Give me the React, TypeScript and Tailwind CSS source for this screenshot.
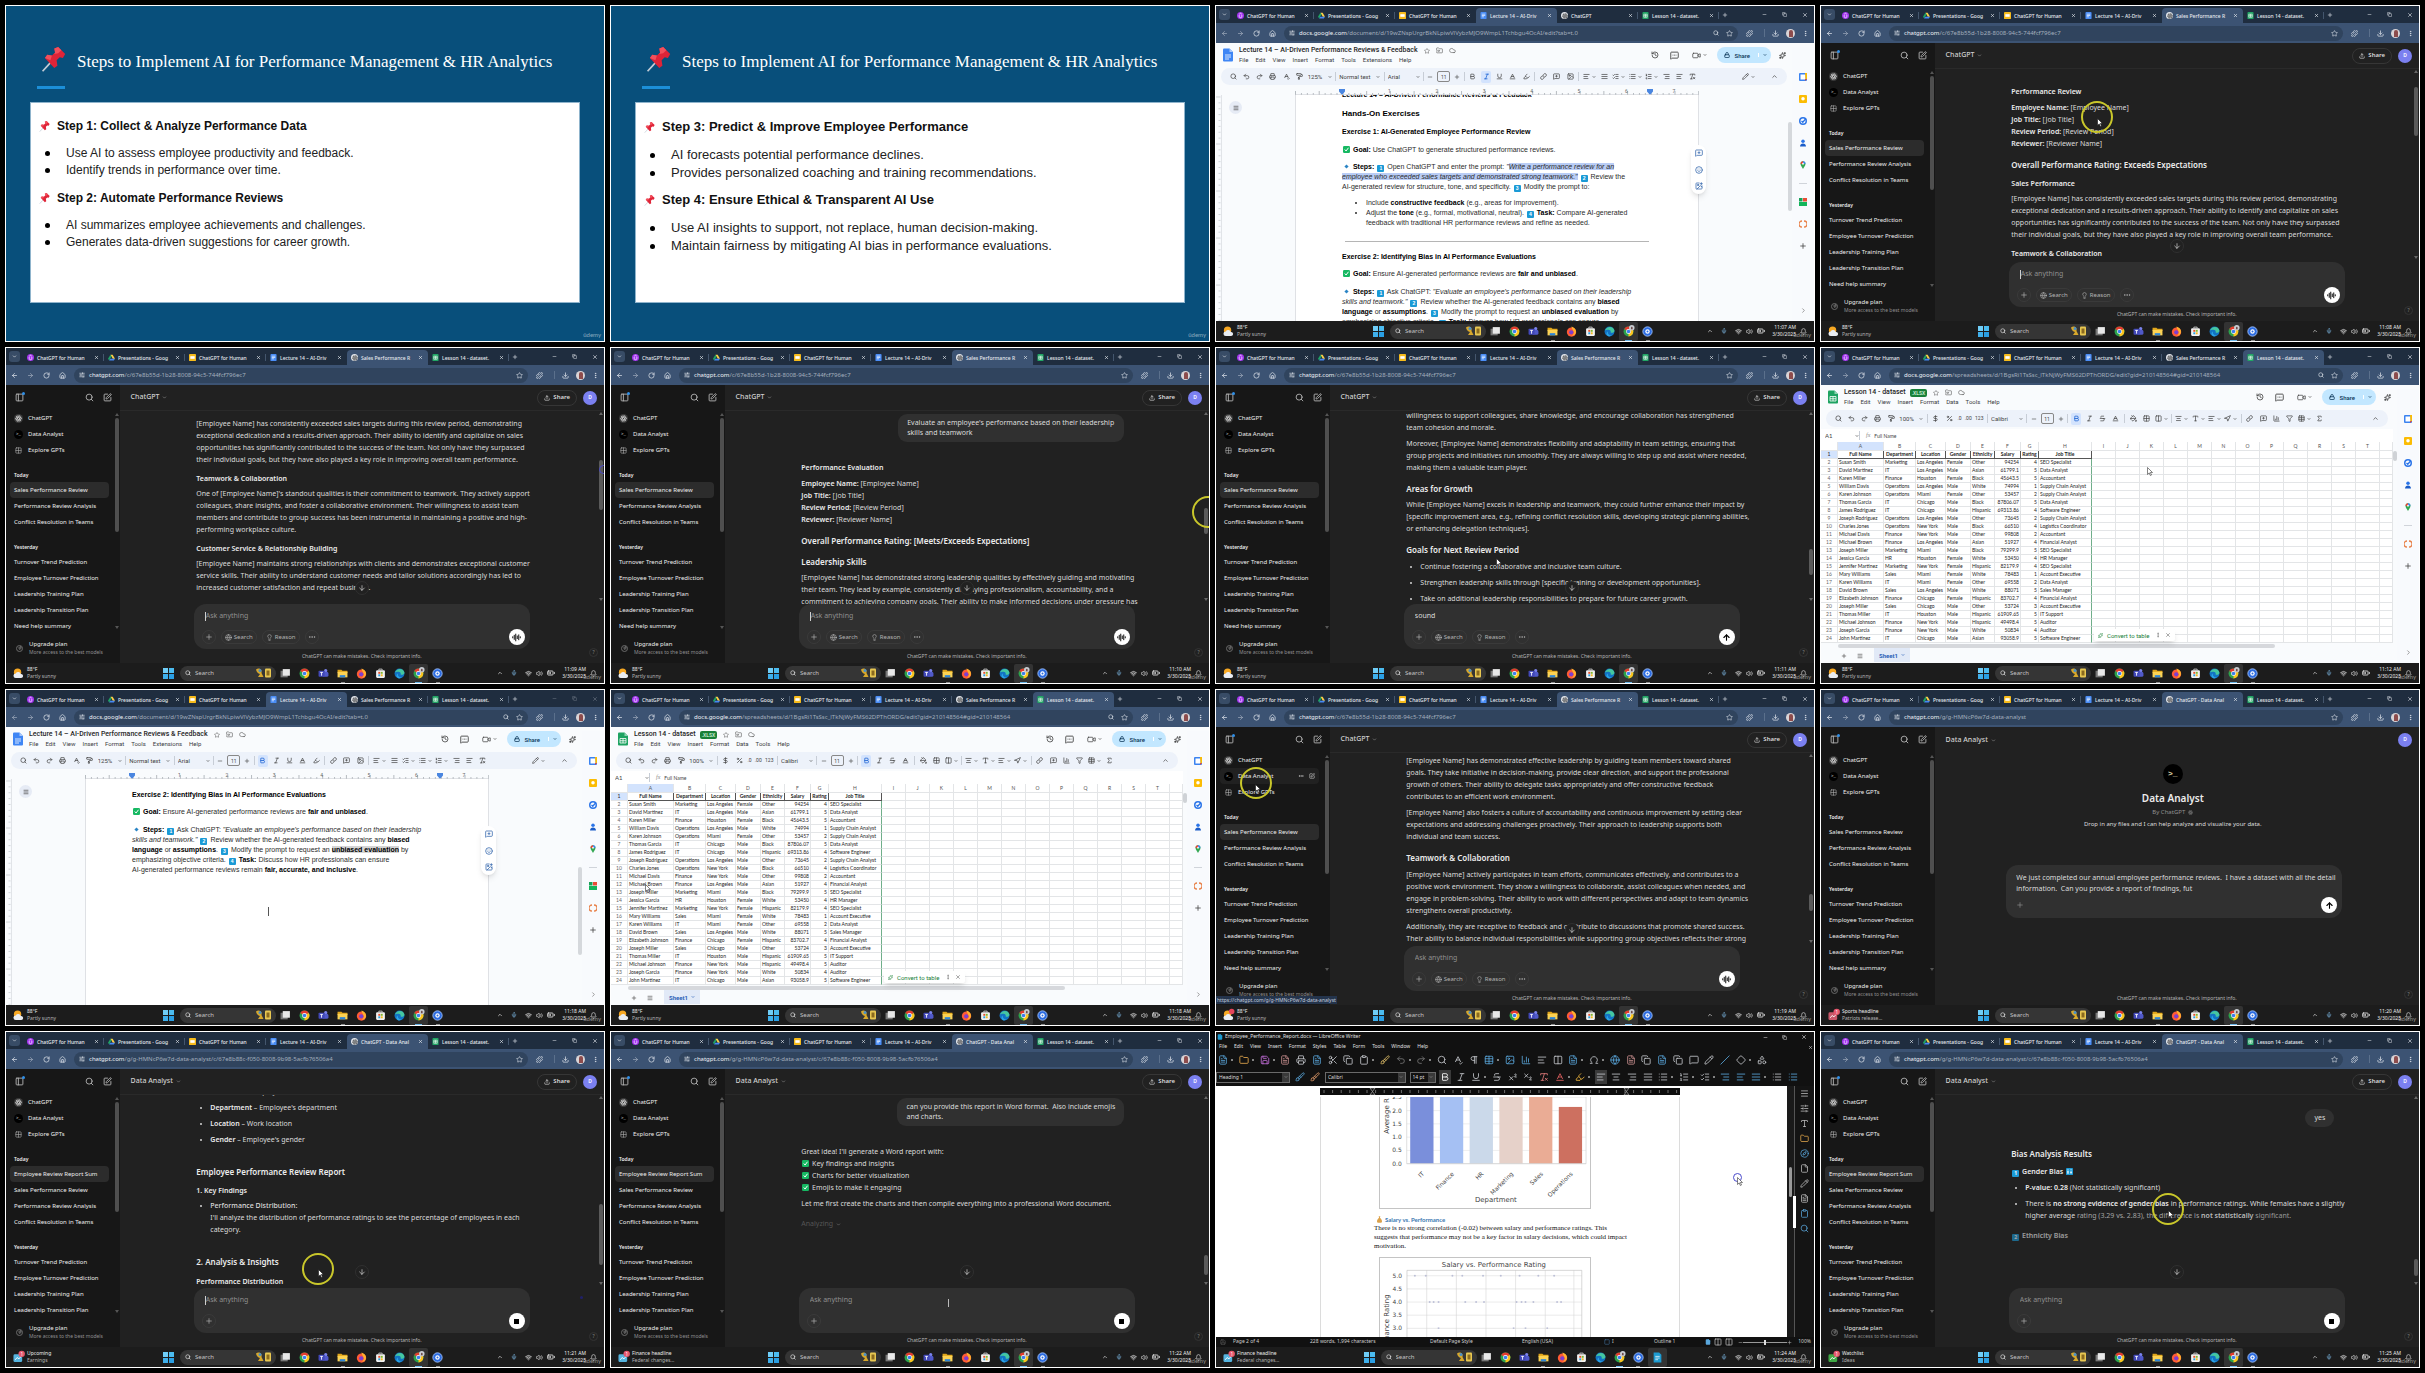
import React from 'react';
import {
  AlignCenter, AlignJustify, AlignLeft, AlignRight, ArrowDown, ArrowLeft, ArrowRight, ArrowUp, AudioLines,
  Baseline, BatteryMedium, Bell, Bold, Brush, ChevronDown, ChevronRight, ChevronUp, Clipboard, Cloud, Columns2, Copy,
  Diamond, DollarSign, Download, Ellipsis, EllipsisVertical, File, FileText, Filter, Folder, FolderInput, Globe, Grid2x2,
  Highlighter, History, House, Image, ImagePlus, Italic, Lightbulb, Link, List, ListChecks, ListOrdered, Lock,
  Menu, MessageSquare, MessageSquareMore, MessageSquarePlus, Mic, Minus, Navigation, Omega, PaintBucket, PaintRoller,
  PanelLeft, Pencil, Percent, Pilcrow, Plus, Printer, Puzzle, Redo2, RemoveFormatting, RotateCw, Save, Scissors, Search,
  Shapes, Sigma, SlidersHorizontal, Smile, Sparkles, SpellCheck, Square, SquarePen, Star, Strikethrough, Subscript,
  Superscript, Table, Type, Underline, Undo2, Upload, Video, Volume2, Wifi, X, Zap, BarChart3, Compass, Slash,
} from 'lucide-react';

type IconType = React.ComponentType<{ className?: string; strokeWidth?: number }>;

/* ------------------------------------------------------------------ shared */

function IconButton({ icon: Icon, label, className = '' }: { icon: IconType; label: string; className?: string }) {
  return (
    <button aria-label={label} className={`grid shrink-0 place-items-center ${className}`}>
      <Icon className="size-full" strokeWidth={2.4} />
    </button>
  );
}

function Frame({ children }: { children: React.ReactNode }) {
  return (
    <section className="relative flex aspect-[600/337] min-w-0 flex-col overflow-hidden border border-white">
      {children}
    </section>
  );
}

function Pointer({ className, dark = false }: { className: string; dark?: boolean }) {
  return (
    <svg viewBox="0 0 12 18" className={`absolute h-[9px] w-[6px] ${className}`}>
      <path d="M1 1v14l3.4-3.2 2.3 5.2 2.3-1-2.3-5H11z" fill="#fff" stroke={dark ? '#333' : '#111'} strokeWidth="1.2" />
    </svg>
  );
}

function Ring({ className }: { className: string }) {
  return <div className={`absolute size-8 rounded-full border-2 border-[#c9c72b] ${className}`} />;
}

function Watermark() {
  return <div className="absolute right-[3px] bottom-[2px] font-['Lato'] text-[6px] leading-[8px] text-white/50">ûdemy</div>;
}

/* --------------------------------------------------------------- favicons */

function GptMark({ className = '' }: { className?: string }) {
  return (
    <svg viewBox="0 0 24 24" className={className} fill="none" stroke="currentColor" strokeWidth="1.7">
      {[0, 60, 120, 180, 240, 300].map((a) => (
        <path key={a} transform={`rotate(${a} 12 12)`} d="M12 8.2V5.4a3.6 3.6 0 0 1 6.4-1.6M8.7 10.1l6.2-3.6" />
      ))}
      <circle cx="12" cy="12" r="8.6" />
    </svg>
  );
}

function Favicon({ kind }: { kind: string }) {
  if (kind === 'udemy')
    return (
      <svg viewBox="0 0 16 16" className="size-[7px] shrink-0"><circle cx="8" cy="8" r="8" fill="#a435f0" /><path d="M5 7v3a3 3 0 0 0 6 0V7M5 5l3-2 3 2" stroke="#fff" strokeWidth="1.6" fill="none" /></svg>
    );
  if (kind === 'drive')
    return (
      <svg viewBox="0 0 16 16" className="size-[7px] shrink-0"><path d="M5.5 1.5h5L16 11h-5z" fill="#ffcf48" /><path d="M5.5 1.5 0 11l2.6 4L8 5.8z" fill="#1fa463" /><path d="M5.2 11H16l-2.6 4H2.6z" fill="#4688f4" /></svg>
    );
  if (kind === 'slides')
    return (
      <svg viewBox="0 0 16 16" className="size-[7px] shrink-0"><rect width="16" height="16" rx="2" fill="#f6bb1b" /><rect x="3" y="5" width="10" height="6" fill="#fff" /></svg>
    );
  if (kind === 'docs')
    return (
      <svg viewBox="0 0 16 16" className="size-[7px] shrink-0"><rect x="1" width="14" height="16" rx="2" fill="#4a8df6" /><path d="M4 5h8M4 8h8M4 11h5" stroke="#fff" strokeWidth="1.5" /></svg>
    );
  if (kind === 'sheets')
    return (
      <svg viewBox="0 0 16 16" className="size-[7px] shrink-0"><rect x="1" width="14" height="16" rx="2" fill="#21a464" /><path d="M4 5h8v7H4zM4 8.5h8M8 5v7" stroke="#fff" strokeWidth="1.3" fill="none" /></svg>
    );
  return (
    <span className="grid size-[7px] shrink-0 place-items-center rounded-full bg-[#e4e7ec] text-[#333]"><GptMark className="size-[6px]" /></span>
  );
}

/* ----------------------------------------------------------- browser chrome */

function BrowserBar({ active, gptTitle, host, path, zoomed = false, idle = false }: {
  active: number; gptTitle: string; host: string; path: string; zoomed?: boolean; idle?: boolean;
}) {
  const tabs = [
    ['udemy', 'ChatGPT for Human'],
    ['drive', 'Presentations - Goog'],
    ['slides', 'ChatGPT for Human'],
    ['docs', 'Lecture 14 – AI-Driv'],
    ['gpt', gptTitle],
    ['sheets', 'Lesson 14 - dataset.'],
  ];
  return (
    <header className="shrink-0 font-['Noto_Sans']">
      <div className="flex h-[17px] items-center bg-[#1f2d3f] text-[#e4e8ee]">
        <div className="grid w-[17px] place-items-center">
          <button aria-label="Search tabs" className="grid size-[11px] place-items-center rounded-[3px] bg-[#384c66]">
            <ChevronDown className="size-[5px]" strokeWidth={3} />
          </button>
        </div>
        <nav className="flex h-full items-end">
          {tabs.map(([kind, title], i) => (
            <a key={i} href="#tab" className={`flex h-[15px] w-[81px] items-center rounded-t-[4px] pr-[5px] pl-[4px] ${i === active ? 'bg-[#3c5373]' : ''}`}>
              <Favicon kind={kind} />
              <span className="ml-[3px] text-[5px] leading-[8px] font-medium whitespace-nowrap">{title}</span>
              <X className="ml-auto size-[5px] shrink-0" strokeWidth={3} />
              {i !== active && i + 1 !== active && <span className="-mr-[5px] ml-[4px] h-[7px] w-px bg-[#44566d]" />}
            </a>
          ))}
        </nav>
        <IconButton icon={Plus} label="New tab" className="ml-[3px] size-[6px]" />
        <div className={`ml-auto flex items-center gap-[15px] pr-[6px] ${idle ? 'opacity-40' : ''}`}>
          <IconButton icon={Minus} label="Minimize" className="size-[5px]" />
          <IconButton icon={Copy} label="Restore" className="size-[5px]" />
          <IconButton icon={X} label="Close" className="size-[6px]" />
        </div>
      </div>
      <div className="flex h-[20px] items-center bg-[#3c5373] pl-[5px] text-[#e2e7ee]">
        <div className="flex items-center gap-[9px]">
          <IconButton icon={ArrowLeft} label="Back" className={idle || active === 3 ? 'size-[7px] opacity-60' : 'size-[7px]'} />
          <IconButton icon={ArrowRight} label="Forward" className="size-[7px] opacity-60" />
          <IconButton icon={RotateCw} label="Reload" className="size-[7px]" />
          <IconButton icon={House} label="Home" className="size-[7px]" />
        </div>
        <div className="ml-[8px] flex h-[15px] min-w-0 flex-1 items-center rounded-full bg-[#30445e] px-[5px]">
          <SlidersHorizontal className="size-[6px]" strokeWidth={2.5} />
          <label className="ml-[4px] flex min-w-0 flex-1 items-center text-[6px] leading-[8px]">
            <span className="text-[#eef2f6]">{host}</span>
            <input aria-label="Address" readOnly value={path} className="min-w-0 flex-1 bg-transparent text-[#a3aebd] outline-none" />
          </label>
          {zoomed && <Search className="mr-[7px] size-[6px]" strokeWidth={2.5} />}
          <Star className="size-[7px]" strokeWidth={2} />
        </div>
        <div className="flex w-[76px] items-center justify-between pr-[5px] pl-[8px]">
          <IconButton icon={Puzzle} label="Extensions" className="size-[7px]" />
          <span className="ml-[4px] h-[8px] w-px bg-[#5b708c]" />
          <IconButton icon={Download} label="Downloads" className="size-[7px]" />
          <span className="grid size-[9px] place-items-center rounded-full bg-[#d9d4d6]"><span className="h-[7px] w-[4px] rounded-t-full bg-[#8d4c4c]" /></span>
          <IconButton icon={EllipsisVertical} label="Menu" className="size-[7px]" />
        </div>
      </div>
    </header>
  );
}

/* ------------------------------------------------------------------ taskbar */

function ChromeIcon({ badge = false }: { badge?: boolean }) {
  return (
    <svg viewBox="0 0 20 20" className="size-[11px] overflow-visible">
      <circle cx="10" cy="10" r="9" fill="#2ba24c" />
      <path d="M10 10 2.2 5.5A9 9 0 0 1 17.8 5.5z" fill="#e33b2e" />
      <path d="M10 10 17.8 5.5A9 9 0 0 1 10 19z" fill="#fcc31e" />
      <circle cx="10" cy="10" r="4.4" fill="#fff" />
      <circle cx="10" cy="10" r="3.3" fill="#3b7ded" />
      {badge && <circle cx="16" cy="3" r="5" fill="#c9cdd2" />}
      {badge && <path d="M14.5 6V3a1.5 1.5 0 0 1 3 0v3z" fill="#6c4a48" />}
    </svg>
  );
}

function TaskIcons({ writer }: { writer: boolean }) {
  const cell = 'relative grid h-[19px] w-[19px] place-items-center';
  return (
    <div className="flex items-center">
      <button aria-label="Task view" className={cell}><svg viewBox="0 0 20 20" className="size-[11px]"><rect x="1" y="5" width="13" height="12" fill="#777" /><rect x="5" y="2" width="13" height="12" fill="#e8e8e8" /></svg></button>
      <button aria-label="Chrome" className={cell}><ChromeIcon /></button>
      <button aria-label="Teams" className={cell}><svg viewBox="0 0 20 20" className="size-[11px]"><circle cx="14" cy="5" r="3" fill="#7b83eb" /><rect x="8" y="7" width="11" height="9" rx="3" fill="#5059c9" /><rect x="1" y="5" width="11" height="11" rx="1.5" fill="#4248b8" /><path d="M4 8h5M6.5 8v6" stroke="#fff" strokeWidth="1.6" /></svg></button>
      <button aria-label="File Explorer" className={cell}><svg viewBox="0 0 20 20" className="size-[11px]"><path d="M1 3h7l2 2h9v4H1z" fill="#e0a51b" /><path d="M1 7h18v10H1z" fill="#fcd354" /><path d="M5 13h10v4H5z" fill="#2f86d6" /></svg><i className="absolute bottom-0 h-px w-[4px] bg-[#8a8a8a]" /></button>
      <button aria-label="Firefox" className={cell}><svg viewBox="0 0 20 20" className="size-[11px]"><circle cx="10" cy="11" r="8.5" fill="#ff5a36" /><path d="M10 1c5 2 9 5 8 11-1 4-4 6-8 6 5-3 5-7 3-10-1-2-3-4-3-7z" fill="#ffb02e" /><circle cx="9.5" cy="11.5" r="3.8" fill="#7b3fd0" /></svg></button>
      <button aria-label="Microsoft Store" className={cell}><svg viewBox="0 0 20 20" className="size-[11px]"><rect x="2" y="4" width="16" height="14" rx="2" fill="#f1f1f1" /><path d="M7 4V2h6v2" stroke="#ddd" strokeWidth="1.5" fill="none" /><path d="M6 7h3.5v3.5H6z" fill="#e8502c" /><path d="M10.5 7H14v3.5h-3.5z" fill="#7db92c" /><path d="M6 11.5h3.5V15H6z" fill="#2a9fe0" /><path d="M10.5 11.5H14V15h-3.5z" fill="#f7b81c" /></svg></button>
      <button aria-label="Edge" className={cell}><svg viewBox="0 0 20 20" className="size-[11px]"><circle cx="10" cy="10" r="9" fill="#1273c4" /><path d="M2 8c2-8 15-9 17 0 0 4-4 5-7 4 1-3-1-5-4-5-3 0-5 1-6 1z" fill="#45c7a0" /><path d="M7 10c-1 5 3 8 8 7-2 1.5-4 2-6 2-5-1-6-7-2-9z" fill="#2ba5e6" /></svg></button>
      <button aria-label="Chrome, profile" className={`${cell} ${writer ? '' : 'bg-[#333]'} rounded-[2px]`}><ChromeIcon badge /><i className="absolute bottom-0 h-px w-[7px] bg-[#6bb6e8]" /></button>
      <button aria-label="Recorder" className={cell}><svg viewBox="0 0 20 20" className="size-[11px]"><circle cx="10" cy="10" r="8.5" fill="#2b6be0" stroke="#a9c8ff" strokeWidth="1.5" /><circle cx="10" cy="10" r="4" fill="#fff" /><circle cx="10" cy="10" r="1.8" fill="#2b6be0" /></svg><i className="absolute bottom-0 h-px w-[4px] bg-[#8a8a8a]" /></button>
      {writer && (
        <button aria-label="LibreOffice Writer" className={`${cell} rounded-[2px] bg-[#333]`}><svg viewBox="0 0 20 20" className="size-[11px]"><path d="M3 1h10l4 4v14H3z" fill="#1d9bd1" /><path d="M6 8h8M6 11h8M6 14h5" stroke="#fff" strokeWidth="1.3" /></svg></button>
      )}
    </div>
  );
}

function WeatherIcon({ kind }: { kind: string }) {
  if (kind === 'sun' || kind === 'sun-badge')
    return (
      <svg viewBox="0 0 24 24" className="size-[11px] overflow-visible"><circle cx="10" cy="9" r="8" fill="#f7a823" /><path d="M6 22a5 5 0 0 1 0-10 6 6 0 0 1 11 1 4.5 4.5 0 0 1 1 9z" fill="#e9edf3" />{kind === 'sun-badge' && <circle cx="19" cy="3" r="6" fill="#e6455c" />}</svg>
    );
  const body = kind === 'stocks' ? '#3fa845' : kind === 'sports' ? '#c9586a' : '#55b4df';
  return (
    <svg viewBox="0 0 24 24" className="size-[11px] overflow-visible">
      <rect x="1" y="5" width="19" height="17" rx="3" fill={body} />
      <path d="m5 17 4-5 4 3 5-6" stroke="#fff" strokeWidth="2" fill="none" />
      <circle cx="19" cy="4" r="7" fill="#e5566c" />
      <text x="19" y="8" textAnchor="middle" fontSize="10" fill="#fff" fontFamily="Noto Sans">1</text>
    </svg>
  );
}

function Taskbar({ time, weather = ['sun', '88°F', 'Partly sunny'], writer = false }: { time: string; weather?: string[]; writer?: boolean }) {
  return (
    <footer className="grid h-[20px] shrink-0 grid-cols-[1fr_auto_1fr] items-center bg-[#1c1c1c] font-['Noto_Sans'] text-[5px] text-[#ededed]">
      <div className="flex items-center gap-[3px] pl-[7px]">
        <WeatherIcon kind={weather[0]} />
        <div className="leading-[7px] whitespace-nowrap"><div>{weather[1]}</div><div className="text-[#b4b4b4]">{weather[2]}</div></div>
      </div>
      <div className="flex items-center">
        <button aria-label="Start" className="grid size-[11px] grid-cols-2 gap-px">
          <span className="bg-[#6fcdf7]" /><span className="bg-[#4cbcf0]" /><span className="bg-[#3fb0ec]" /><span className="bg-[#2a9fe4]" />
        </button>
        <label className="ml-[6px] flex h-[15px] w-[96px] items-center rounded-full bg-[#353535] pr-[4px] pl-[5px]">
          <Search className="size-[6px]" strokeWidth={2.5} />
          <input aria-label="Search Windows" placeholder="Search" className="ml-[4px] w-[50px] bg-transparent text-[6px] leading-[8px] placeholder:text-[#c4c4c4]" />
          <svg viewBox="0 0 34 24" className="ml-auto h-[12px] w-[17px]"><path d="M2 5c6-5 13 0 11 7l4 8H6l4-6C6 13 3 10 2 5z" fill="#d8a82c" /><circle cx="10" cy="7" r="3" fill="#4a90c8" /><rect x="20" y="3" width="12" height="18" rx="2" fill="#e8c752" /><path d="M23 7h6v10h-6z" fill="#8b6a1f" /></svg>
        </label>
        <TaskIcons writer={writer} />
      </div>
      <div className="flex items-center justify-end gap-[5px] pr-[7px]">
        <ChevronUp className="size-[6px]" strokeWidth={2.5} />
        <Mic className="mx-[3px] size-[6px] text-[#7fbbe6]" />
        <Wifi className="size-[7px]" strokeWidth={2.5} />
        <Volume2 className="-ml-px size-[7px]" />
        <BatteryMedium className="-ml-px size-[8px]" strokeWidth={2.5} />
        <div className="ml-[2px] text-right leading-[7px] whitespace-nowrap"><div>{time} AM</div><div>3/30/2025</div></div>
        <Bell className="-ml-px size-[7px]" />
      </div>
    </footer>
  );
}

/* ------------------------------------------------------------------ ChatGPT */

function SideRow({ children, icon, hover = false }: { children: string; icon: React.ReactNode; hover?: boolean }) {
  return (
    <a href="#gpt" className={`mr-[11px] ml-[4px] flex h-[16px] items-center rounded-[4px] pl-[4px] text-[6px] ${hover ? 'bg-[#212121]' : ''}`}>
      <span className="grid size-[9px] place-items-center">{icon}</span>
      <span className="ml-[5px]">{children}</span>
      {hover && <><Ellipsis className="ml-auto size-[6px]" /><SquarePen className="mr-[4px] ml-[5px] size-[6px]" /></>}
    </a>
  );
}

function Sidebar({ selected, report = false, hover = false }: { selected: string; report?: boolean; hover?: boolean }) {
  const today = ['Sales Performance Review', 'Performance Review Analysis', 'Conflict Resolution in Teams'];
  const yesterday = ['Turnover Trend Prediction', 'Employee Turnover Prediction', 'Leadership Training Plan', 'Leadership Transition Plan'];
  if (report) today.unshift('Employee Review Report Sum');
  else yesterday.push('Need help summary');
  const item = (t: string) => (
    <li key={t}>
      <a href="#chat" className={`mr-[11px] ml-[4px] flex h-[16px] items-center rounded-[4px] pl-[4px] text-[6px] whitespace-nowrap ${t === selected ? 'bg-[#2c2c2c]' : ''}`}>{t}</a>
    </li>
  );
  return (
    <aside className="relative flex w-[19%] shrink-0 flex-col bg-[#171717] text-[#ededed]">
      <div className="flex h-[25px] items-center pr-[8px] pl-[9px] text-[#b4b4b4]">
        <div className="relative">
          <IconButton icon={PanelLeft} label="Close sidebar" className="size-[9px]" />
          <span className="absolute -top-px -right-px size-[3px] rounded-full bg-[#2f8fe8]" />
        </div>
        <IconButton icon={Search} label="Search chats" className="ml-auto size-[9px]" />
        <IconButton icon={SquarePen} label="New chat" className="ml-[9px] size-[9px]" />
      </div>
      <SideRow icon={<span className="grid size-[9px] place-items-center rounded-full bg-[#3a3a3a]"><GptMark className="size-[7px]" /></span>}>ChatGPT</SideRow>
      <SideRow hover={hover} icon={<span className="grid size-[9px] place-items-center rounded-full bg-black font-['Liberation_Mono'] text-[4px] leading-[9px]">&gt;_</span>}>Data Analyst</SideRow>
      <SideRow icon={<Grid2x2 className="size-[7px] text-[#b4b4b4]" />}>Explore GPTs</SideRow>
      <h3 className="mt-[11px] mb-px pl-[8px] text-[5px] leading-[12px] font-semibold">Today</h3>
      <ul>{today.map(item)}</ul>
      <h3 className="mt-[11px] mb-px pl-[8px] text-[5px] leading-[12px] font-semibold">Yesterday</h3>
      <ul>{yesterday.map(item)}</ul>
      <a href="#upgrade" className="mt-auto mb-[7px] flex items-center pl-[10px] leading-[8px]">
        <span className="grid size-[7px] place-items-center rounded-full border border-[#6a6a6a]"><Zap className="size-[4px]" /></span>
        <span className="ml-[6px] whitespace-nowrap"><span className="block text-[6px]">Upgrade plan</span><span className="block text-[5px] text-[#8f8f8f]">More access to the best models</span></span>
      </a>
      <span className={`absolute top-[33px] right-px w-[4px] rounded-full bg-[#4f4f4f] ${report ? 'h-[110px]' : 'h-[114px]'}`} />
      <span className="absolute top-[28px] right-px border-x-2 border-b-[3px] border-x-transparent border-b-[#555]" />
      <span className="absolute top-[241px] right-px border-x-2 border-t-[3px] border-x-transparent border-t-[#555]" />
    </aside>
  );
}

type Mode = 'voice' | 'send' | 'stop';

function SendButton({ mode }: { mode: Mode }) {
  return (
    <button aria-label={mode} className="ml-auto grid size-[16px] shrink-0 place-items-center rounded-full bg-white text-black">
      {mode === 'voice' && <AudioLines className="size-[9px]" strokeWidth={2.5} />}
      {mode === 'send' && <ArrowUp className="size-[9px]" strokeWidth={3} />}
      {mode === 'stop' && <span className="size-[5px] bg-black" />}
    </button>
  );
}

function Composer({ mode, tools = true, value = '', caret = false }: { mode: Mode; tools?: boolean; value?: string; caret?: boolean }) {
  return (
    <form className="mx-auto flex w-full max-w-[336px] flex-col rounded-[12px] bg-[#303030] pt-[7px] pr-[5px] pb-[4px] pl-[8px]" onSubmit={(e) => e.preventDefault()}>
      <div className="flex h-[10px] items-center pl-[3px]">
        {caret && <span className="h-[9px] w-px bg-[#cfcfcf]" />}
        <input aria-label="Message" placeholder="Ask anything" defaultValue={value} className="w-full bg-transparent text-[7px] leading-[10px] text-[#dedede] placeholder:text-[#8f8f8f]" />
      </div>
      <div className="mt-[8px] flex h-[16px] items-center gap-[5px] text-[6px] text-[#b4b4b4]">
        <button aria-label="Attach" className="grid size-[14px] place-items-center rounded-full border border-[#3a3a3a]"><Plus className="size-[8px]" /></button>
        {tools && (
          <>
            <button className="flex h-[14px] items-center gap-[2px] rounded-full border border-[#3a3a3a] px-[3px]"><Globe className="size-[7px]" />Search</button>
            <button className="flex h-[14px] items-center gap-[2px] rounded-full border border-[#3a3a3a] px-[3px]"><Lightbulb className="size-[7px]" />Reason</button>
            <button aria-label="More tools" className="grid size-[14px] place-items-center rounded-full border border-[#3a3a3a]"><Ellipsis className="size-[8px]" /></button>
          </>
        )}
        <SendButton mode={mode} />
      </div>
    </form>
  );
}

function GptFrame({ title = 'ChatGPT', tabTitle = 'Sales Performance R', path = '/c/67e8b55d-1b28-8008-94c5-744fcf796ec7', selected = 'Sales Performance Review', report = false, hover = false, share = true, time, weather, composer, thumb, children, overlay }: {
  title?: string; tabTitle?: string; path?: string; selected?: string; report?: boolean; hover?: boolean; share?: boolean; time: string; weather?: string[];
  composer?: React.ReactNode; thumb?: string; children: React.ReactNode; overlay?: React.ReactNode;
}) {
  return (
    <Frame>
      <BrowserBar active={4} gptTitle={tabTitle} host="chatgpt.com" path={path} />
      <div className="flex min-h-0 flex-1 font-['Noto_Sans']">
        <Sidebar selected={selected} report={report} hover={hover} />
        <main className="relative flex min-w-0 flex-1 flex-col bg-[#212121] text-[#dcdcdc]">
          <div className={`flex h-[26px] shrink-0 items-center pr-[7px] pl-[11px] ${share ? 'border-b border-[#2a2a2a]' : ''}`}>
            <button className="flex items-center gap-[3px] text-[7px] font-medium text-[#cfcfcf]">{title}<ChevronDown className="size-[5px] text-[#8f8f8f]" strokeWidth={3} /></button>
            {share && <button className="ml-auto flex h-[16px] items-center gap-[3px] rounded-full border border-[#363636] px-[6px] text-[6px] font-semibold"><Upload className="size-[6px]" strokeWidth={2.5} />Share</button>}
            <span className={`grid size-[14px] place-items-center rounded-full bg-[#7b80f0] text-[5px] font-semibold text-white ${share ? 'ml-[6px]' : 'ml-auto'}`}>D</span>
          </div>
          <div className="relative min-h-0 flex-1 overflow-hidden pr-2">
            <div className="mx-auto max-w-[323px]">{children}</div>
            {thumb && (
              <>
                <span className={`absolute right-px w-[4px] rounded-full bg-[#5a5a5a] ${thumb}`} />
                <span className="absolute top-px right-px border-x-2 border-b-[3px] border-x-transparent border-b-[#666]" />
                <span className="absolute right-px bottom-[3px] border-x-2 border-t-[3px] border-x-transparent border-t-[#666]" />
                <button aria-label="Scroll to bottom" className="absolute bottom-[9px] left-1/2 grid size-[14px] -translate-x-1/2 place-items-center rounded-full border border-[#303030] bg-[#212121]"><ArrowDown className="size-[8px]" /></button>
              </>
            )}
          </div>
          {composer}
          <p className="h-[14px] shrink-0 text-center text-[5px] leading-[15px] text-[#b4b4b4]">ChatGPT can make mistakes. Check important info.</p>
          <button aria-label="Help" className="absolute right-[6px] bottom-[6px] grid size-[9px] place-items-center rounded-full border border-[#333] text-[5px] leading-none text-[#888]">?</button>
        </main>
      </div>
      <Taskbar time={time} weather={weather} />
      {overlay}
      <Watermark />
    </Frame>
  );
}

function Lines({ lines, className = 'mt-[3px]' }: { lines: React.ReactNode[]; className?: string }) {
  return (
    <p className={`text-[7px] leading-[12px] whitespace-nowrap ${className}`}>
      {lines.map((l, i) => <span key={i} className="block">{l}</span>)}
    </p>
  );
}

function Sub({ children, className = 'mt-[7px]' }: { children: React.ReactNode; className?: string }) {
  return <h4 className={`text-[7px] leading-[12px] font-semibold whitespace-nowrap text-[#ececec] ${className}`}>{children}</h4>;
}

function Head({ children, className = 'mt-[8px]' }: { children: React.ReactNode; className?: string }) {
  return <h3 className={`text-[8px] leading-[14px] font-semibold whitespace-nowrap text-[#ececec] ${className}`}>{children}</h3>;
}

function Bullet({ children, className = 'mt-[4px]' }: { children: React.ReactNode; className?: string }) {
  return (
    <li className={`flex text-[7px] leading-[12px] whitespace-nowrap ${className}`}>
      <span className="mt-[5px] mr-[8px] ml-[4px] size-[2px] shrink-0 rounded-full bg-[#d6d6d6]" />
      <span>{children}</span>
    </li>
  );
}

function Bubble({ lines, className = 'mt-[3px]' }: { lines: string[]; className?: string }) {
  return (
    <div className={`ml-auto w-fit rounded-[9px] bg-[#303030] px-[9px] py-[4px] text-[7px] leading-[10px] whitespace-pre ${className} ${lines.length > 1 ? 'min-w-[70%]' : ''}`}>
      {lines.map((l) => <p key={l}>{l}</p>)}
    </div>
  );
}

function B({ children }: { children: React.ReactNode }) {
  return <strong className="font-semibold text-[#ececec]">{children}</strong>;
}

function Key({ n }: { n: string }) {
  return <span className="mx-px inline-block size-[7px] rounded-[1px] bg-[#1b9ad6] text-center align-[-1px] text-[5px] leading-[7px] font-bold text-white not-italic">{n}</span>;
}

function Restroom() {
  return (
    <svg viewBox="0 0 16 16" className="mx-px inline-block size-[7px] align-[-1px]"><rect width="16" height="16" rx="2" fill="#1b9ad6" /><circle cx="4.5" cy="4" r="1.4" fill="#fff" /><circle cx="11.5" cy="4" r="1.4" fill="#fff" /><path d="M3 6.500h3V13H3zM11.5 6 9 11h1.500v2h2v-2H14z" fill="#fff" /></svg>
  );
}

function Check() {
  return (
    <svg viewBox="0 0 16 16" className="mx-px inline-block size-[7px] align-[-1px]"><rect width="16" height="16" rx="3" fill="#16b862" /><path d="m4 8 3 3.5L12.5 4" stroke="#fff" strokeWidth="2.2" fill="none" /></svg>
  );
}

const salesPara = [
  '[Employee Name] has consistently exceeded sales targets during this review period, demonstrating',
  'exceptional dedication and a results-driven approach. Their ability to identify and capitalize on sales',
  'opportunities has significantly contributed to the success of the team. Not only have they surpassed',
  'their individual goals, but they have also played a key role in improving overall team performance.',
];

const fields = [
  <><B>Employee Name:</B> [Employee Name]</>,
  <><B>Job Title:</B> [Job Title]</>,
  <><B>Review Period:</B> [Review Period]</>,
  <><B>Reviewer:</B> [Reviewer Name]</>,
];

const analystPath = '/g/g-HMNcP6w7d-data-analyst/c/67e8b88c-f050-8008-9b98-5acfb76506a4';

/* ------------------------------------------------------------------- slides */

function PinIcon({ className }: { className: string }) {
  return (
    <svg viewBox="0 0 32 32" className={className}>
      <path d="M13 19 2 31" stroke="#c3ccd6" strokeWidth="2.2" />
      <path d="m17 2 5-2 9 9-3 5-4-1-4 4 1 7-4 3L5 14l3-4 6 1 4-4z" fill="#df2438" />
      <path d="m17 2 5-2 4 4-4 4-5 1 1-2zM8 10l6 1-2 6-7-3z" fill="#f2505c" />
    </svg>
  );
}

function Slide({ big = false, parts }: { big?: boolean; parts: [string, string[]][] }) {
  return (
    <Frame>
      <div className="flex flex-1 flex-col bg-[#084f7b] px-[24px] pt-[40px] pb-[38px]">
        <div className="flex h-[27px] items-center pl-[11px]">
          <PinIcon className="size-[25px] shrink-0" />
          <h1 className="mt-[4px] ml-[11px] font-['Liberation_Serif'] text-[17px] leading-[24px] whitespace-nowrap text-white">Steps to Implement AI for Performance Management &amp; HR Analytics</h1>
        </div>
        <div className="mt-[13px] ml-[7px] h-[3px] w-[28px] bg-[#1c8fd8]" />
        <div className={`mt-[13px] flex-1 border border-[#8fb4cc] bg-white pl-[8px] font-['Liberation_Sans'] text-[#111] ${big ? 'pt-[15px]' : 'pt-[14px]'}`}>
          {parts.map(([title, items], i) => (
            <div key={title} className={i ? (big ? 'mt-[9px]' : 'mt-[10px]') : ''}>
              <h2 className={`flex h-[18px] items-center font-bold whitespace-nowrap ${big ? 'text-[13px]' : 'text-[12px]'}`}><PinIcon className="mr-[7px] size-[11px]" />{title}</h2>
              <ul className={`mt-[10px] whitespace-nowrap text-[#222] ${big ? 'text-[13px] leading-[18px]' : 'text-[12px] leading-[17px]'}`}>
                {items.map((t) => <li key={t} className="flex items-center"><span className="mr-[16px] ml-[6px] size-[5px] rounded-full bg-black" />{t}</li>)}
              </ul>
            </div>
          ))}
        </div>
      </div>
      <Watermark />
    </Frame>
  );
}

/* --------------------------------------------------------------------- docs */

function SidePanel({ sheet = false }: { sheet?: boolean }) {
  return (
    <aside className="flex w-[22px] shrink-0 flex-col items-center bg-[#f8fafd] pt-[26px] pb-[7px]">
      <svg viewBox="0 0 16 16" className="size-[8px] shrink-0"><rect width="16" height="16" rx="2" fill="#3b83f0" /><rect x="3" y="3" width="10" height="10" fill="#fff" /><path d="M12 12h4l-4 4z" fill="#e9453a" /><path d="M12 0h4v12h-3z" fill="#fbbc04" /></svg>
      <svg viewBox="0 0 16 16" className="mt-[14px] size-[8px] shrink-0"><rect width="16" height="16" rx="2" fill="#fbbc04" /><circle cx="8" cy="7.5" r="3.5" fill="#fff" /></svg>
      <svg viewBox="0 0 16 16" className="mt-[14px] size-[8px] shrink-0"><circle cx="8" cy="8" r="6.5" fill="none" stroke="#2a74e8" strokeWidth="3" /><path d="m5 8 2.5 2.5L14 3" stroke="#2a74e8" strokeWidth="2.5" fill="none" /></svg>
      <svg viewBox="0 0 16 16" className="mt-[14px] size-[8px] shrink-0"><circle cx="8" cy="4.5" r="3.5" fill="#2a74e8" /><path d="M2 15c0-8 12-8 12 0z" fill="#1b5cc8" /></svg>
      <svg viewBox="0 0 16 16" className="mt-[14px] size-[8px] shrink-0"><path d="M8 16C5 11 3 9 3 5.500a5 5 0 0 1 10 0C13 9 11 11 8 16z" fill="#34a853" /><path d="M8 .5a5 5 0 0 0-5 5l5 1z" fill="#ea4335" /><path d="M8 .5a5 5 0 0 1 5 5H8z" fill="#4285f4" /><circle cx="8" cy="5.5" r="1.8" fill="#fff" /></svg>
      <span className="mt-[14px] h-px w-[8px] shrink-0 bg-[#d0d4da]" />
      {!sheet && <svg viewBox="0 0 16 16" className="mt-[14px] size-[8px] shrink-0"><path d="M0 0h7v7H0z" fill="#18a058" /><path d="M8 0h8v7H8z" fill="#e94b35" /><path d="M0 8h16v8H0z" fill="#13b45a" /></svg>}
      <svg viewBox="0 0 16 16" className="mt-[14px] size-[8px] shrink-0"><path d="M6 2a6 6 0 0 0 0 12M10 2a6 6 0 0 1 0 12" stroke="#e8824a" strokeWidth="2.6" fill="none" /></svg>
      <IconButton icon={Plus} label="Get add-ons" className="mt-[14px] size-[8px] text-[#444]" />
      <IconButton icon={ChevronRight} label="Hide side panel" className="mt-auto size-[7px] text-[#777]" />
    </aside>
  );
}

function OfficeHeader({ title, sheet = false }: { title: string; sheet?: boolean }) {
  const menus = sheet ? ['File', 'Edit', 'View', 'Insert', 'Format', 'Data', 'Tools', 'Help'] : ['File', 'Edit', 'View', 'Insert', 'Format', 'Tools', 'Extensions', 'Help'];
  return (
    <div className="flex h-[24px] shrink-0 items-center bg-[#f9fbfd] pl-[7px] font-['Roboto'] text-[#3c4043]">
      <svg viewBox="0 0 20 26" className="h-[14px] w-[10px]"><path d="M2 0h11l7 7v17a2 2 0 0 1-2 2H2a2 2 0 0 1-2-2V2a2 2 0 0 1 2-2z" fill={sheet ? '#1ea362' : '#3f86f5'} /><path d="M13 0l7 7h-7z" fill={sheet ? '#8ed1b1' : '#a8c7fa'} />{sheet ? <path d="M4 12h12v9H4zM4 16.5h12M10 12v9" stroke="#fff" strokeWidth="1.6" fill="none" /> : <path d="M4 13h12M4 17h12M4 21h8" stroke="#fff" strokeWidth="1.6" />}</svg>
      <div className="ml-[6px]">
        <div className="flex h-[9px] items-center gap-[6px] text-[7px] leading-[9px] whitespace-nowrap text-[#1f1f1f]">
          <span className="font-medium">{title}</span>
          {sheet && <span className="-ml-[2px] rounded-[2px] bg-[#188038] px-[2px] text-[5px] leading-[8px] font-bold text-[#bfe6cb]">.XLSX</span>}
          <Star className="size-[6px] text-[#555]" /><FolderInput className="size-[7px] text-[#555]" /><Cloud className="size-[7px] text-[#555]" />
        </div>
        <nav className="mt-px flex gap-[7px] text-[6px] leading-[8px]">{menus.map((m) => <button key={m}>{m}</button>)}</nav>
      </div>
      <div className="ml-auto flex items-center pr-[8px] text-[#444]">
        <IconButton icon={History} label="Version history" className="size-[8px]" />
        <IconButton icon={MessageSquareMore} label="Comments" className="ml-[11px] size-[9px]" />
        <button aria-label="Join a call" className="ml-[13px] flex items-center gap-[2px]"><Video className="size-[9px]" /><ChevronDown className="size-[4px]" strokeWidth={4} /></button>
        <button className="ml-[10px] flex h-[16px] items-center gap-[5px] rounded-full bg-[#c2e7ff] pr-[4px] pl-[7px] text-[6px] font-medium text-[#0b3557]"><Lock className="size-[6px]" strokeWidth={3} />Share<span className="ml-[3px] border-l border-white pl-[4px]"><ChevronDown className="size-[4px]" strokeWidth={4} /></span></button>
        <IconButton icon={Sparkles} label="Gemini" className="ml-[8px] size-[7px] text-[#222]" />
        <span className="ml-[10px] grid h-[11px] w-[10px] place-items-end justify-center bg-[#9db4cc]"><span className="h-[9px] w-[6px] rounded-t-full bg-[#a8604f]" /></span>
      </div>
    </div>
  );
}

function Pick({ label, value, className }: { label: string; value: string; className: string }) {
  return (
    <label className={`relative flex shrink-0 items-center ${className}`}>
      <select aria-label={label} defaultValue={value} className="w-full appearance-none bg-transparent text-[6px] leading-[8px]"><option>{value}</option></select>
      <ChevronDown className="pointer-events-none absolute right-0 size-[4px]" strokeWidth={4} />
    </label>
  );
}

function SizeBox() {
  return (
    <span className="flex shrink-0 items-center gap-[4px]">
      <IconButton icon={Minus} label="Decrease font size" className="size-[6px]" />
      <input aria-label="Font size" defaultValue="11" className="h-[11px] w-[13px] rounded-[2px] border border-[#888] text-center text-[5px] leading-[8px]" />
      <IconButton icon={Plus} label="Increase font size" className="size-[6px]" />
    </span>
  );
}

function Tool({ icon: Icon, label, active = false, caret = false }: { icon: IconType; label: string; active?: boolean; caret?: boolean }) {
  return (
    <button aria-label={label} className={`flex h-[12px] shrink-0 items-center justify-center rounded-[2px] ${caret ? '' : 'w-[10px]'} ${active ? 'bg-[#d3e3fd] text-[#0b57d0]' : ''}`}>
      <Icon className="size-[7px]" strokeWidth={2.4} />
      {caret && <ChevronDown className="ml-[2px] size-[4px]" strokeWidth={4} />}
    </button>
  );
}

const Sep = () => <span className="h-[9px] w-px shrink-0 bg-[#c7cdd6]" />;

function DocsToolbar({ bold }: { bold: boolean }) {
  return (
    <div className="mx-[5px] mt-[1px] flex h-[17px] shrink-0 items-center justify-between rounded-full bg-[#edf2fa] px-[7px] font-['Roboto'] text-[#444]">
      <Tool icon={Search} label="Menus" /><Tool icon={Undo2} label="Undo" /><Tool icon={Redo2} label="Redo" /><Tool icon={Printer} label="Print" /><Tool icon={SpellCheck} label="Spelling" /><Tool icon={PaintRoller} label="Paint format" />
      <Pick label="Zoom" value="125%" className="w-[24px]" /><Sep />
      <Pick label="Styles" value="Normal text" className="w-[41px]" /><Sep />
      <Pick label="Font" value="Arial" className="w-[32px]" /><Sep />
      <SizeBox /><Sep />
      <Tool icon={Bold} label="Bold" active={bold} /><Tool icon={Italic} label="Italic" active={!bold} /><Tool icon={Underline} label="Underline" /><Tool icon={Baseline} label="Text color" /><Tool icon={Highlighter} label="Highlight color" /><Sep />
      <Tool icon={Link} label="Insert link" /><Tool icon={MessageSquarePlus} label="Add comment" /><Tool icon={Image} label="Insert image" /><Sep />
      <Tool icon={AlignLeft} label="Align" caret /><Tool icon={AlignJustify} label="Line spacing" /><Tool icon={ListChecks} label="Checklist" caret /><Tool icon={List} label="Bulleted list" caret /><Tool icon={ListOrdered} label="Numbered list" caret />
      <Tool icon={AlignRight} label="Decrease indent" /><Tool icon={AlignLeft} label="Increase indent" /><Tool icon={RemoveFormatting} label="Clear formatting" />
      <span className="w-[38px]" />
      <Tool icon={Pencil} label="Editing mode" caret /><span className="w-[8px]" /><Tool icon={ChevronUp} label="Hide menus" />
    </div>
  );
}

function Ruler() {
  const ticks = Array.from({ length: 69 }, (_, i) => i);
  return (
    <svg viewBox="0 0 404 7" className="block h-[7px] w-[404px]">
      {ticks.map((i) => <path key={i} d={`M${i * 5.93 + 0.5} ${i % 4 ? 5 : 3}V7`} stroke="#9aa0a6" strokeWidth="0.7" />)}
      {[1, 2, 3, 4, 5, 6, 7].map((n) => <text key={n} x={n * 47.4 + 47} y="5" fontSize="5" textAnchor="middle" fill="#666" fontFamily="Roboto">{n}</text>)}
      <path d="M44 1h6v2.5L47 7l-3-3.5zM352 1h6v2.5L355 7l-3-3.5z" fill="#4a86e0" />
      <path d="M0 6.7h404" stroke="#c4c7cc" strokeWidth="0.6" />
    </svg>
  );
}

function DocsFrame({ time, bold, path, pill, thumb, idle, children, overlay }: {
  time: string; bold: boolean; path: string; pill: string; thumb: string; idle?: boolean; children: React.ReactNode; overlay?: React.ReactNode;
}) {
  return (
    <Frame>
      <BrowserBar active={3} gptTitle={idle ? 'Sales Performance R' : 'ChatGPT'} host="docs.google.com" path={path} zoomed idle={idle} />
      <div className="relative flex min-h-0 flex-1 flex-col bg-[#f9fbfd]">
        <OfficeHeader title="Lecture 14 – AI-Driven Performance Reviews & Feedback" />
        <div className="flex min-h-0 flex-1">
          <div className="relative flex min-w-0 flex-1 flex-col">
            <DocsToolbar bold={bold} />
            <div className="mt-[3px] ml-[79px] shrink-0"><Ruler /></div>
            <div className="relative flex min-h-0 flex-1">
              <div className="w-[79px] shrink-0">
                <svg viewBox="0 0 6 228" className="absolute top-0 left-0 h-full w-[6px]">{Array.from({ length: 39 }, (_, i) => <path key={i} d={`M${i % 8 ? 2.5 : 0} ${i * 5.93 + 2}H4.5`} stroke="#b7bbc0" strokeWidth="0.6" />)}<path d="M5.5 0v228" stroke="#d0d3d8" strokeWidth="0.6" /></svg>
                <button aria-label="Show outline" className="mt-[6px] ml-[13px] grid size-[13px] place-items-center rounded-full bg-[#e6ebf5] text-[#555]"><Menu className="size-[6px]" strokeWidth={3} /></button>
              </div>
              <article className="w-[404px] overflow-hidden border-x border-[#dfe1e5] bg-white pl-[46px] font-['Liberation_Sans'] text-[7px] leading-[10px] whitespace-nowrap text-[#2b2b2b]">{children}</article>
              <div className={`absolute left-[475px] flex h-[49px] w-[15px] flex-col items-center justify-between rounded-full bg-white py-[4px] text-[#3c6db0] shadow-md ${pill}`}>
                <IconButton icon={MessageSquarePlus} label="Add comment" className="size-[8px]" />
                <IconButton icon={Smile} label="Add emoji reaction" className="size-[8px]" />
                <IconButton icon={ImagePlus} label="Suggest edits" className="size-[8px]" />
              </div>
              <span className={`absolute right-0 w-[4px] rounded-full bg-[#d5d8dc] ${thumb}`} />
            </div>
          </div>
          <div className="-mt-[20px] flex"><SidePanel /></div>
        </div>
      </div>
      <Taskbar time={time} />
      {overlay}
      <Watermark />
    </Frame>
  );
}

function DocBold({ children, className = '' }: { children: React.ReactNode; className?: string }) {
  return <strong className={`font-bold text-black ${className}`}>{children}</strong>;
}

function ExerciseTwo({ highlight = false, full = false }: { highlight?: boolean; full?: boolean }) {
  return (
    <>
      <h3 className="font-bold text-black">Exercise 2: Identifying Bias in AI Performance Evaluations</h3>
      <p className="mt-[7px]"><Check /> <DocBold>Goal:</DocBold> Ensure AI-generated performance reviews are <DocBold>fair and unbiased</DocBold>.</p>
      <p className="mt-[8px]">
        <span className="mx-[3px] inline-block size-[3px] rotate-45 bg-[#2a84c4] align-[1px]" /> <DocBold>Steps:</DocBold> <Key n="1" /> Ask ChatGPT: <em>"Evaluate an employee's performance based on their leadership</em><br />
        <em>skills and teamwork."</em> <Key n="2" /> Review whether the AI-generated feedback contains any <DocBold>biased</DocBold><br />
        <DocBold>language</DocBold> or <DocBold>assumptions</DocBold>. <Key n="3" /> Modify the prompt to request an <DocBold className={highlight ? 'bg-[#d5d5d5]' : ''}>unbiased evaluation</DocBold> by<br />
        emphasizing objective criteria. <Key n="4" /> <DocBold>Task:</DocBold> Discuss how HR professionals can ensure
        {full && <><br />AI-generated performance reviews remain <DocBold>fair, accurate, and inclusive</DocBold>.</>}
      </p>
    </>
  );
}

/* ------------------------------------------------------------------- sheets */

const rows: string[][] = [
  ['Susan Smith', 'Marketing', 'Los Angeles', 'Female', 'Other', '94254', '4', 'SEO Specialist'],
  ['David Martinez', 'IT', 'Los Angeles', 'Male', 'Asian', '61799.1', '5', 'Data Analyst'],
  ['Karen Miller', 'Finance', 'Houston', 'Female', 'Black', '45643.5', '5', 'Accountant'],
  ['William Davis', 'Operations', 'Los Angeles', 'Male', 'White', '74994', '1', 'Supply Chain Analyst'],
  ['Karen Johnson', 'Operations', 'Miami', 'Female', 'Other', '53457', '2', 'Supply Chain Analyst'],
  ['Thomas Garcia', 'IT', 'Chicago', 'Male', 'Black', '87806.07', '5', 'Data Analyst'],
  ['James Rodriguez', 'IT', 'Chicago', 'Male', 'Hispanic', '69313.86', '4', 'Software Engineer'],
  ['Joseph Rodriguez', 'Operations', 'Los Angeles', 'Male', 'Other', '73645', '2', 'Supply Chain Analyst'],
  ['Charles Jones', 'Operations', 'New York', 'Male', 'Black', '66510', '4', 'Logistics Coordinator'],
  ['Michael Davis', 'Finance', 'New York', 'Male', 'Other', '99808', '2', 'Accountant'],
  ['Michael Brown', 'Finance', 'Los Angeles', 'Male', 'Asian', '51927', '4', 'Financial Analyst'],
  ['Joseph Miller', 'Marketing', 'Miami', 'Male', 'Black', '79299.9', '5', 'SEO Specialist'],
  ['Jessica Garcia', 'HR', 'Houston', 'Female', 'White', '53450', '4', 'HR Manager'],
  ['Jennifer Martinez', 'Marketing', 'New York', 'Female', 'Hispanic', '82179.9', '4', 'SEO Specialist'],
  ['Mary Williams', 'Sales', 'Miami', 'Female', 'White', '78483', '1', 'Account Executive'],
  ['Karen Williams', 'IT', 'Miami', 'Female', 'Other', '69558', '2', 'Data Analyst'],
  ['David Brown', 'Sales', 'Los Angeles', 'Male', 'White', '88071', '5', 'Sales Manager'],
  ['Elizabeth Johnson', 'Finance', 'Chicago', 'Female', 'Hispanic', '83702.7', '4', 'Financial Analyst'],
  ['Joseph Miller', 'Sales', 'Chicago', 'Male', 'Other', '53724', '3', 'Account Executive'],
  ['Thomas Miller', 'IT', 'Houston', 'Male', 'Hispanic', '61909.65', '5', 'IT Support'],
  ['Michael Johnson', 'Finance', 'New York', 'Male', 'Hispanic', '49498.4', '5', 'Auditor'],
  ['Joseph Garcia', 'Finance', 'New York', 'Male', 'White', '50834', '4', 'Auditor'],
  ['John Martinez', 'IT', 'Chicago', 'Male', 'Asian', '93058.9', '5', 'Software Engineer'],
];
const letters = 'ABCDEFGHIJKLMNOPQRST'.split('');

function Grid() {
  const blank = letters.slice(8);
  const cell = 'border-r border-b border-[#e3e5e7] p-0 whitespace-nowrap';
  return (
    <table className="w-full table-fixed border-separate border-spacing-0 bg-white font-['Lato'] text-[5px] leading-[7px] text-[#1c1c1c]">
      <colgroup>
        <col className="w-[17px]" /><col className="w-[46px]" /><col className="w-[32px]" /><col className="w-[30px]" /><col className="w-[25px]" /><col className="w-[24px]" /><col className="w-[26px]" /><col className="w-[18px]" /><col className="w-[53px]" />
        {blank.map((b) => <col key={b} className="w-[24px]" />)}
        <col />
      </colgroup>
      <thead>
        <tr className="h-[9px]">
          <th className={cell} />
          {letters.map((l) => <th key={l} className={`${cell} font-normal text-[#555] ${l === 'A' ? 'bg-[#d3e3fd] font-bold' : ''}`}>{l}</th>)}
          <th className={cell} />
        </tr>
      </thead>
      <tbody>
        <tr className="h-[8px]">
          <th className={`${cell} bg-[#d3e3fd] font-normal`}>1</th>
          {['Full Name', 'Department', 'Location', 'Gender', 'Ethnicity', 'Salary', 'Rating', 'Job Title'].map((h) => <th key={h} className="border-r border-b border-[#555] p-0 font-bold whitespace-nowrap">{h}</th>)}
          {blank.map((b) => <td key={b} className={cell} />)}<td className={cell} />
        </tr>
        {rows.map((r, i) => (
          <tr key={i} className="h-[8px]">
            <th className={`${cell} font-normal text-[#666]`}>{i + 2}</th>
            {r.map((c, j) => <td key={j} className={`${cell} px-px ${j === 5 || j === 6 ? 'text-right' : ''} ${j === 7 ? 'border-r-[#6fae8a]' : ''}`}>{c}</td>)}
            {blank.map((b) => <td key={b} className={cell} />)}<td className={cell} />
          </tr>
        ))}
      </tbody>
    </table>
  );
}

function SheetsFrame({ time, overlay }: { time: string; overlay?: React.ReactNode }) {
  return (
    <Frame>
      <BrowserBar active={5} gptTitle="Sales Performance R" host="docs.google.com" path="/spreadsheets/d/1BgsRi1TsSsc_lTkNjWyFMS62DPThORDG/edit?gid=210148564#gid=210148564" zoomed />
      <div className="flex min-h-0 flex-1 flex-col bg-[#f9fbfd]">
        <OfficeHeader title="Lesson 14 - dataset" sheet />
        <div className="flex min-h-0 flex-1">
          <div className="flex min-w-0 flex-1 flex-col">
            <div className="mx-[5px] mt-[1px] flex h-[17px] shrink-0 items-center justify-between rounded-full bg-[#edf2fa] px-[7px] font-['Roboto'] text-[#444]">
              <Tool icon={Search} label="Menus" /><Tool icon={Undo2} label="Undo" /><Tool icon={Redo2} label="Redo" /><Tool icon={Printer} label="Print" /><Tool icon={PaintRoller} label="Paint format" />
              <Pick label="Zoom" value="100%" className="w-[24px]" /><Sep />
              <Tool icon={DollarSign} label="Currency" /><Tool icon={Percent} label="Percent" />
              <button className="text-[5px]">.0</button><button className="text-[5px]">.00</button><button className="text-[5px]">123</button><Sep />
              <Pick label="Font" value="Calibri" className="w-[32px]" /><Sep />
              <SizeBox /><Sep />
              <Tool icon={Bold} label="Bold" active /><Tool icon={Italic} label="Italic" /><Tool icon={Strikethrough} label="Strikethrough" /><Tool icon={Baseline} label="Text color" /><Sep />
              <Tool icon={PaintBucket} label="Fill color" /><Tool icon={Grid2x2} label="Borders" /><Tool icon={Columns2} label="Merge" caret /><Sep />
              <Tool icon={AlignCenter} label="Horizontal align" caret /><Tool icon={Type} label="Vertical align" caret /><Tool icon={AlignLeft} label="Wrapping" caret /><Tool icon={Navigation} label="Rotation" caret /><Sep />
              <Tool icon={Link} label="Insert link" /><Tool icon={MessageSquarePlus} label="Comment" /><Tool icon={BarChart3} label="Chart" /><Tool icon={Filter} label="Filter" /><Tool icon={Table} label="Table views" caret /><Tool icon={Sigma} label="Functions" />
              <span className="w-[40px]" /><Tool icon={ChevronUp} label="Hide menus" />
            </div>
            <div className="mt-[2px] flex h-[13px] shrink-0 items-center bg-white font-['Lato'] text-[5px] text-[#444]">
              <Pick label="Cell" value="A1" className="ml-[4px] w-[34px]" /><Sep />
              <em className="ml-[6px] font-['Liberation_Serif'] text-[6px] text-[#888]">fx</em>
              <input aria-label="Formula" defaultValue="Full Name" className="ml-[4px] w-[80px] bg-transparent leading-[8px]" />
            </div>
            <div className="relative"><Grid />
              <div className="absolute bottom-[2px] left-[273px] flex h-[12px] w-[81px] items-center rounded-[2px] bg-white px-[4px] font-['Roboto'] text-[6px] text-[#188038] shadow-md">
                <Sparkles className="size-[5px]" /><button className="ml-[4px] whitespace-nowrap">Convert to table</button><EllipsisVertical className="ml-auto size-[6px] text-[#555]" /><X className="ml-[4px] size-[6px] text-[#555]" />
              </div>
            </div>
            <div className="flex h-[5px] items-center pl-[17px]"><span className="h-[4px] w-[437px] rounded-full bg-[#d6d8dc]" /></div>
            <div className="flex flex-1 items-stretch pl-[20px] font-['Roboto'] text-[6px] text-[#444]">
              <IconButton icon={Plus} label="Add sheet" className="size-[6px] self-center" />
              <IconButton icon={Menu} label="All sheets" className="ml-[10px] size-[6px] self-center" />
              <button className="mb-px ml-[11px] flex items-center gap-[3px] bg-[#e1e9f7] px-[5px] font-bold text-[#2b62b8]">Sheet1<ChevronDown className="size-[4px]" strokeWidth={4} /></button>
            </div>
          </div>
          <div className="-mt-[20px] flex"><span className="mt-[62px] h-[10px] w-[4px] rounded-full bg-[#cfd2d6]" /><SidePanel sheet /></div>
        </div>
      </div>
      <Taskbar time={time} />
      {overlay}
      <Watermark />
    </Frame>
  );
}

/* ------------------------------------------------------------------- writer */

function BarChart() {
  const bars: [string, string, number][] = [
    ['IT', '#7a8fdb', 0], ['Finance', '#a5c0f3', 0], ['HR', '#cbd9ea', 0], ['Marketing', '#e6d1c9', 0], ['Sales', '#eaac95', 0], ['Operations', '#cd7060', 10],
  ];
  return (
    <svg viewBox="0 0 212 112" className="block h-[112px] w-[212px] border-x border-b border-[#c4c4c4]" fontFamily="DejaVu Sans" fill="#444">
      {['2.5', '2.0', '1.5', '1.0', '0.5', '0.0'].map((t, i) => (
        <g key={t}><text x="22" y={i * 13.4 + 2.4} textAnchor="end" fontSize="6">{t}</text><path d={`M27 ${i * 13.4 + 0.3}H208`} stroke="#ddd" strokeWidth="0.5" /></g>
      ))}
      {bars.map(([name, fill, top], i) => (
        <g key={name}>
          <rect x={30.5 + i * 30} y={top} width="23.5" height={67 - top} fill={fill} />
          <text transform={`translate(${45 + i * 30} 78) rotate(-45)`} textAnchor="end" fontSize="6">{name}</text>
        </g>
      ))}
      <path d="M27 0v67.3H208V0" stroke="#c8c8c8" strokeWidth="0.6" fill="none" />
      <text x="117" y="106" textAnchor="middle" fontSize="7">Department</text>
      <text transform="translate(9 37) rotate(-90)" fontSize="7">Average R</text>
    </svg>
  );
}

function ScatterChart() {
  const pts: [number, number][] = [[35, 18], [46, 18], [73, 18], [83, 18], [104, 18], [122, 18], [141, 18], [160, 18], [176, 18], [50, 44.5], [54, 44.5], [59, 44.5], [86, 44.5], [97, 44.5], [105, 44.5], [138, 44.5], [143, 44.5], [147, 44.5], [155, 44.5], [179, 44.5], [183, 44.5], [59, 71], [135, 71], [147, 71], [169, 71]];
  return (
    <svg viewBox="0 0 212 81" className="block h-[81px] w-[212px] border-x border-t border-[#c4c4c4]" fontFamily="DejaVu Sans" fill="#444">
      <text x="115" y="9" textAnchor="middle" fontSize="7">Salary vs. Performance Rating</text>
      {['5.0', '4.5', '4.0', '3.5', '3.0'].map((t, i) => (
        <g key={t}><text x="22" y={i * 13.3 + 20} textAnchor="end" fontSize="6">{t}</text><path d={`M27 ${i * 13.3 + 18}H204`} stroke="#d4d4d4" strokeWidth="0.5" /></g>
      ))}
      {[47, 77, 107, 137, 167, 196].map((x) => <path key={x} d={`M${x} 12.5V81`} stroke="#d4d4d4" strokeWidth="0.6" />)}
      <path d="M27 81V12.5H204V81" stroke="#bbb" strokeWidth="0.6" fill="none" />
      {pts.map(([x, y], i) => <circle key={i} cx={x} cy={y} r="1" fill="#9a9fc4" opacity="0.6" />)}
      <text transform="translate(9 83) rotate(-90)" fontSize="7">nance Rating</text>
    </svg>
  );
}

function WriterIcon({ icon: Icon, label, tone = 'text-[#c4c7cb]', caret = false, on = false }: { icon: IconType; label: string; tone?: string; caret?: boolean; on?: boolean }) {
  return (
    <button aria-label={label} className={`flex h-[14px] shrink-0 items-center px-px ${tone} ${on ? 'bg-[#3a3a3a]' : ''}`}>
      <Icon className="size-[10px]" strokeWidth={2} />
      {caret && <span className="ml-[3px] size-[2px] rounded-full bg-[#aaa]" />}
    </button>
  );
}

function Combo({ label, value, className }: { label: string; value: string; className: string }) {
  return (
    <label className={`relative flex h-[11px] shrink-0 items-center border border-[#6a6a6a] ${className}`}>
      <select aria-label={label} defaultValue={value} className="w-full appearance-none bg-transparent pl-[2px] text-[5px] leading-[8px] text-[#ddd]"><option>{value}</option></select>
      <span className="pointer-events-none absolute right-0 grid h-[9px] w-[7px] place-items-center bg-[#3a3a3a]"><ChevronDown className="size-[4px] text-[#aaa]" strokeWidth={3} /></span>
    </label>
  );
}

function WriterFrame() {
  const blue = 'text-[#5aa7dc]';
  return (
    <Frame>
      <header className="shrink-0 bg-[#111] font-['Noto_Sans'] text-[5px] text-[#e0e0e0]">
        <div className="flex h-[10px] items-center pr-[7px] pl-px">
          <File className="size-[6px] fill-[#1d9bd1] text-[#1d9bd1]" /><span className="ml-[2px] whitespace-nowrap">Employee_Performance_Report.docx — LibreOffice Writer</span>
          <div className="ml-auto flex items-center gap-[14px]"><IconButton icon={Minus} label="Minimize" className="size-[5px]" /><IconButton icon={Copy} label="Restore" className="size-[5px]" /><IconButton icon={X} label="Close" className="size-[6px]" /></div>
        </div>
        <div className="flex h-[10px] items-center pr-px pl-[3px]">
          <nav className="flex gap-[7px]">{['File', 'Edit', 'View', 'Insert', 'Format', 'Styles', 'Table', 'Form', 'Tools', 'Window', 'Help'].map((m) => <button key={m}>{m}</button>)}</nav>
          <IconButton icon={X} label="Close document" className="ml-auto size-[5px]" />
        </div>
        <div className="flex h-[16px] items-center justify-between pr-[46px] pl-px">
          <WriterIcon icon={FileText} label="New" tone={blue} caret /><WriterIcon icon={Folder} label="Open" tone="fill-[#e8ab4e] text-[#e8ab4e]" caret /><WriterIcon icon={Save} label="Save" tone="text-[#c66fdc]" caret />
          <WriterIcon icon={FileText} label="Export PDF" tone="text-[#c98f8f]" /><WriterIcon icon={Printer} label="Print" /><WriterIcon icon={FileText} label="Preview" tone={blue} />
          <WriterIcon icon={Scissors} label="Cut" /><WriterIcon icon={Copy} label="Copy" /><WriterIcon icon={Clipboard} label="Paste" caret /><WriterIcon icon={Brush} label="Clone" tone="text-[#e2c16a]" />
          <WriterIcon icon={Undo2} label="Undo" tone="text-[#777]" caret /><WriterIcon icon={Redo2} label="Redo" tone="text-[#777]" caret />
          <WriterIcon icon={Search} label="Find" /><WriterIcon icon={SpellCheck} label="Spelling" /><WriterIcon icon={Pilcrow} label="Marks" />
          <WriterIcon icon={Table} label="Table" tone={blue} caret /><WriterIcon icon={Image} label="Image" tone={blue} /><WriterIcon icon={BarChart3} label="Chart" tone={blue} /><WriterIcon icon={AlignLeft} label="Text box" />
          <WriterIcon icon={Columns2} label="Page break" /><WriterIcon icon={FileText} label="Field" tone={blue} caret /><WriterIcon icon={Omega} label="Special character" caret />
          <WriterIcon icon={Globe} label="Hyperlink" tone={blue} /><WriterIcon icon={FileText} label="Footnote" tone="text-[#c98f8f]" /><WriterIcon icon={Copy} label="Endnote" /><WriterIcon icon={FileText} label="Bookmark" tone={blue} /><WriterIcon icon={Copy} label="Cross reference" />
          <WriterIcon icon={MessageSquare} label="Comment" /><WriterIcon icon={Pencil} label="Track changes" /><WriterIcon icon={Slash} label="Line" tone={blue} /><WriterIcon icon={Diamond} label="Shapes" caret /><WriterIcon icon={Shapes} label="Draw" />
        </div>
        <div className="flex h-[18px] items-center justify-between pr-[15px]">
          <Combo label="Paragraph style" value="Heading 1" className="w-[74px]" />
          <WriterIcon icon={Brush} label="Update style" tone={blue} /><WriterIcon icon={Brush} label="New style" tone="text-[#e09a6a]" />
          <Combo label="Font name" value="Calibri" className="w-[81px]" /><Combo label="Font size" value="14 pt" className="w-[26px]" />
          <WriterIcon icon={Bold} label="Bold" on tone="text-white" /><WriterIcon icon={Italic} label="Italic" /><WriterIcon icon={Underline} label="Underline" caret /><WriterIcon icon={Strikethrough} label="Strikethrough" />
          <WriterIcon icon={Superscript} label="Superscript" /><WriterIcon icon={Subscript} label="Subscript" /><WriterIcon icon={RemoveFormatting} label="Clear" tone="text-[#e07a7a]" />
          <WriterIcon icon={Baseline} label="Font color" tone="text-[#e06060]" caret /><WriterIcon icon={Highlighter} label="Highlighting" tone="text-[#f0b73c]" caret />
          <WriterIcon icon={AlignLeft} label="Align left" on /><WriterIcon icon={AlignCenter} label="Center" /><WriterIcon icon={AlignRight} label="Align right" /><WriterIcon icon={AlignJustify} label="Justify" />
          <WriterIcon icon={List} label="Bullets" caret /><WriterIcon icon={ListOrdered} label="Numbering" caret /><WriterIcon icon={ListChecks} label="Outline" caret />
          <WriterIcon icon={AlignRight} label="Increase indent" tone={blue} /><WriterIcon icon={AlignLeft} label="Decrease indent" tone={blue} /><WriterIcon icon={AlignJustify} label="Line spacing" tone={blue} caret /><WriterIcon icon={List} label="Paragraph spacing" /><WriterIcon icon={List} label="Reduce spacing" tone={blue} />
        </div>
      </header>
      <div className="flex min-h-0 flex-1">
        <div className="min-w-0 flex-1 overflow-hidden bg-white">
          <div className="ml-[104px] w-[360px]">
            <svg viewBox="0 0 360 7" className="mt-[2px] block h-[7px] w-full bg-[#0d0d0d]">
              {Array.from({ length: 42 }, (_, i) => <path key={i} d={`M${i * 8.6 + 4} 2V5`} stroke="#888" strokeWidth="0.8" />)}
              <path d="M50 0h5l-2.5 3.5L55 7h-5l2.5-3.5zM304 0h5l-2.5 3.5L309 7h-5l2.5-3.5z" fill="none" stroke="#aaa" strokeWidth="0.7" />
            </svg>
            <div className="mt-[2px] border-x border-[#dcdcdc] pl-[53px]">
              <div className="ml-[5px]"><BarChart /></div>
              <h2 className="mt-[6px] flex h-[9px] items-center font-['Lato'] text-[6px] font-bold text-[#3a77b0]">
                <svg viewBox="0 0 12 16" className="mr-[3px] ml-[3px] h-[7px] w-[5px]"><path d="M4 0h4L7 4c4 3 5 6 5 9s-1 3-6 3-6 0-6-3 1-6 5-9z" fill="#dca24a" /></svg>Salary vs. Performance
              </h2>
              <p className="font-['Liberation_Serif'] text-[7px] leading-[9px] whitespace-nowrap text-[#111]">
                There is no strong correlation (-0.02) between salary and performance ratings. This<br />suggests that performance may not be a key factor in salary decisions, which could impact<br />motivation.
              </p>
              <div className="mt-[6px] ml-[5px]"><ScatterChart /></div>
            </div>
          </div>
        </div>
        <div className="relative w-[8px] shrink-0 border-r border-[#555] bg-[#1a1a1a]"><span className="absolute top-[81px] left-[2px] h-[30px] w-[3px] rounded-full bg-[#9a9a9a]" /><span className="absolute top-[110px] -right-[2px] h-[32px] w-[3px] bg-white" /></div>
        <aside className="flex w-[19px] shrink-0 flex-col items-center gap-[6px] bg-[#141414] pt-[3px]">
          {([[Menu, 'Settings'], [SlidersHorizontal, 'Properties'], [Type, 'Styles'], [Folder, 'Gallery'], [Compass, 'Navigator'], [File, 'Page'], [Pencil, 'Inspector'], [FileText, 'Changes'], [Clipboard, 'Design'], [Search, 'Accessibility']] as [IconType, string][]).map(([I, l], i) => (
            <button key={l} aria-label={l} className={i === 3 ? 'text-[#e8ab4e]' : i === 4 || i > 7 ? 'text-[#5aa7dc]' : 'text-[#c0c0c0]'}><I className="size-[9px]" strokeWidth={2} /></button>
          ))}
        </aside>
      </div>
      <div className="flex h-[10px] shrink-0 items-center bg-[#111] pr-[3px] font-['Noto_Sans'] text-[5px] text-[#d0d0d0]">
        <Save className="ml-[4px] size-[6px] text-[#666]" />
        <span className="ml-[7px] w-[77px]">Page 2 of 4</span><span className="w-[120px]">228 words, 1,994 characters</span><span className="w-[92px]">Default Page Style</span><span className="w-[82px]">English (USA)</span>
        <Square className="size-[6px] text-[#4a7fb0]" /><span className="ml-[2px] w-[42px]">I</span><span>Outline 1</span>
        <span className="ml-auto flex items-center gap-[3px]"><File className="size-[6px] fill-[#5aa7dc] text-[#5aa7dc]" /><Columns2 className="size-[8px]" /><Columns2 className="size-[8px]" /></span>
        <Minus className="ml-[5px] size-[5px]" />
        <input type="range" aria-label="Zoom" defaultValue={50} className="h-[6px] w-[44px] appearance-none bg-[linear-gradient(#999,#999)] bg-[length:100%_1px] bg-center bg-no-repeat [&::-webkit-slider-thumb]:h-[5px] [&::-webkit-slider-thumb]:w-[2px] [&::-webkit-slider-thumb]:appearance-none [&::-webkit-slider-thumb]:bg-[#ddd]" />
        <Plus className="mr-[6px] size-[5px]" /><span>100%</span>
      </div>
      <Taskbar time="11:24" weather={['news', 'Finance headline', 'Federal changes...']} writer />
      <div className="absolute top-[141px] left-[517px] size-[9px] rounded-full border border-[#4a4acb]" />
      <Pointer className="top-[145px] left-[521px]" dark />
      <Watermark />
    </Frame>
  );
}

/* --------------------------------------------------------------------- page */

export default function App() {
  return (
    <div className="grid grid-cols-4 gap-[5px] bg-black p-[5px]">
      <Slide parts={[
        ['Step 1: Collect & Analyze Performance Data', ['Use AI to assess employee productivity and feedback.', 'Identify trends in performance over time.']],
        ['Step 2: Automate Performance Reviews', ['AI summarizes employee achievements and challenges.', 'Generates data-driven suggestions for career growth.']],
      ]} />
      <Slide big parts={[
        ['Step 3: Predict & Improve Employee Performance', ['AI forecasts potential performance declines.', 'Provides personalized coaching and training recommendations.']],
        ['Step 4: Ensure Ethical & Transparent AI Use', ['Use AI insights to support, not replace, human decision-making.', 'Maintain fairness by mitigating AI bias in performance evaluations.']],
      ]} />
      <DocsFrame time="11:07" bold={false} path="/document/d/19wZNspUrgrBkNLpiwVlVybzMJO9WmpL1Tchbgu4OcAI/edit?tab=t.0" pill="top-[50px]" thumb="top-[27px] h-[89px]">
        <h2 className="-mt-[5px] font-bold text-black">Lecture 14 – AI-Driven Performance Reviews &amp; Feedback</h2>
        <h2 className="mt-[9px] text-[8px] leading-[10px] font-bold text-black">Hands-On Exercises</h2>
        <h3 className="mt-[8px] font-bold text-black">Exercise 1: AI-Generated Employee Performance Review</h3>
        <p className="mt-[8px]"><Check /> <DocBold>Goal:</DocBold> Use ChatGPT to generate structured performance reviews.</p>
        <p className="mt-[7px]">
          <span className="mx-[3px] inline-block size-[3px] rotate-45 bg-[#2a84c4] align-[1px]" /> <DocBold>Steps:</DocBold> <Key n="1" /> Open ChatGPT and enter the prompt: <em>"<span className="bg-[#b9cdf6]">Write a performance review for an</span></em><br />
          <em className="bg-[#b9cdf6]">employee who exceeded sales targets and demonstrated strong teamwork."</em> <Key n="2" /> Review the<br />
          AI-generated review for structure, tone, and specificity. <Key n="3" /> Modify the prompt to:
        </p>
        <ul className="mt-[6px] list-disc pl-[24px]">
          <li>Include <DocBold>constructive feedback</DocBold> (e.g., areas for improvement).</li>
          <li>Adjust the <DocBold>tone</DocBold> (e.g., formal, motivational, neutral). <Key n="4" /> <DocBold>Task:</DocBold> Compare AI-generated<br />feedback with traditional HR performance reviews and refine as needed.</li>
        </ul>
        <hr className="mt-[13px] mb-[10px] ml-[3px] w-[304px] border-[#b5b5b5]" />
        <ExerciseTwo />
      </DocsFrame>
      <GptFrame time="11:08" thumb="top-[18px] h-[49px]" composer={<Composer mode="voice" caret />} overlay={<><Ring className="top-[95px] left-[260px]" /><Pointer className="top-[112px] left-[276px]" /></>}>
        <Sub className="mt-[17px]">Performance Review</Sub>
        <Lines lines={fields} className="mt-[4px]" />
        <Head>Overall Performance Rating: Exceeds Expectations</Head>
        <Sub className="mt-[6px]">Sales Performance</Sub>
        <Lines lines={salesPara} />
        <Sub>Teamwork &amp; Collaboration</Sub>
      </GptFrame>

      <GptFrame time="11:09" thumb="top-[49px] h-[50px]" composer={<Composer mode="voice" caret />} overlay={<div className="absolute top-[117px] -right-[4px] size-[9px] rounded-full border border-[#4a4acb]" />}>
        <Sub className="-mt-[8px]">Sales Performance</Sub>
        <Lines lines={salesPara} />
        <Sub>Teamwork &amp; Collaboration</Sub>
        <Lines lines={[
          "One of [Employee Name]'s standout qualities is their commitment to teamwork. They actively support",
          'colleagues, share insights, and foster a collaborative environment. Their willingness to assist team',
          'members and contribute to group success has been instrumental in maintaining a positive and high-',
          'performing workplace culture.',
        ]} />
        <Sub>Customer Service &amp; Relationship Building</Sub>
        <Lines lines={[
          '[Employee Name] maintains strong relationships with clients and demonstrates exceptional customer',
          'service skills. Their ability to understand customer needs and tailor solutions accordingly has led to',
          'increased customer satisfaction and repeat business.',
        ]} />
      </GptFrame>
      <GptFrame time="11:10" thumb="top-[97px] h-[26px]" composer={<Composer mode="voice" caret />} overlay={<Ring className="top-[148px] -right-[15px]" />}>
        <Bubble lines={["Evaluate an employee's performance based on their leadership", 'skills and teamwork']} />
        <Sub className="mt-[20px]">Performance Evaluation</Sub>
        <Lines lines={fields} className="mt-[4px]" />
        <Head>Overall Performance Rating: [Meets/Exceeds Expectations]</Head>
        <Head className="mt-[7px]">Leadership Skills</Head>
        <Lines lines={[
          '[Employee Name] has demonstrated strong leadership qualities by effectively guiding and motivating',
          'their team. They lead by example, consistently displaying professionalism, accountability, and a',
          'commitment to achieving company goals. Their ability to make informed decisions under pressure has',
        ]} />
      </GptFrame>
      <GptFrame time="11:11" thumb="top-[138px] h-[26px]" composer={<Composer mode="send" value="sound" />} overlay={<Pointer className="top-[210px] left-[280px]" />}>
        <Lines className="-mt-px" lines={['willingness to support colleagues, share knowledge, and encourage collaboration has strengthened', 'team cohesion and morale.']} />
        <Lines className="mt-[4px]" lines={['Moreover, [Employee Name] demonstrates flexibility and adaptability in team settings, ensuring that', 'group projects and initiatives run smoothly. They are always willing to step up and assist where needed,', 'making them a valuable team player.']} />
        <Head>Areas for Growth</Head>
        <Lines lines={['While [Employee Name] excels in leadership and teamwork, they could further enhance their impact by', '[specific improvement area, e.g., refining conflict resolution skills, developing strategic planning abilities,', 'or enhancing delegation techniques].']} />
        <Head>Goals for Next Review Period</Head>
        <ul>
          <Bullet>Continue fostering a collaborative and inclusive team culture.</Bullet>
          <Bullet>Strengthen leadership skills through [specific training or development opportunities].</Bullet>
          <Bullet>Take on additional leadership responsibilities to prepare for future career growth.</Bullet>
        </ul>
      </GptFrame>
      <SheetsFrame time="11:12" overlay={<Pointer className="top-[119px] left-[326px]" dark />} />

      <DocsFrame time="11:18" bold idle path="/document/d/19wZNspUrgrBkNLpiwVlVybzMJO9WmpL1Tchbgu4OcAI/edit?tab=t.0" pill="top-[47px]" thumb="top-[88px] h-[88px]" overlay={<div className="absolute top-[217px] left-[262px] h-[9px] w-px bg-[#555]" />}>
        <div className="h-[11px]" />
        <ExerciseTwo highlight full />
      </DocsFrame>
      <SheetsFrame time="11:18" overlay={<Pointer className="top-[194px] left-[34px]" dark />} />
      <GptFrame time="11:19" hover weather={['sun-badge', '88°F', 'Partly sunny']} thumb="top-[141px] h-[17px]" composer={<Composer mode="voice" />} overlay={
        <>
          <div className="absolute bottom-[21px] left-0 bg-[#24344c] px-px font-['Noto_Sans'] text-[5px] leading-[8px] text-[#c5cede]">https://chatgpt.com/g/g-HMNcP6w7d-data-analyst</div>
          <Ring className="top-[77px] left-[24px]" /><Pointer className="top-[94px] left-[39px]" />
        </>
      }>
        <Lines className="mt-[2px]" lines={['[Employee Name] has demonstrated effective leadership by guiding team members toward shared', 'goals. They take initiative in decision-making, provide clear direction, and support the professional', 'growth of others. Their ability to delegate tasks appropriately and offer constructive feedback', 'contributes to an efficient work environment.']} />
        <Lines className="mt-[4px]" lines={['[Employee Name] also fosters a culture of accountability and continuous improvement by setting clear', 'expectations and addressing challenges proactively. Their approach to leadership supports both', 'individual and team success.']} />
        <Head>Teamwork &amp; Collaboration</Head>
        <Lines className="mt-[4px]" lines={['[Employee Name] actively participates in team efforts, communicates effectively, and contributes to a', 'positive work environment. They show a willingness to collaborate, assist colleagues when needed, and', 'engage in problem-solving. Their ability to work with different perspectives and adapt to team dynamics', 'strengthens overall productivity.']} />
        <Lines className="mt-[4px]" lines={['Additionally, they are receptive to feedback and contribute to discussions that promote shared success.', 'Their ability to balance individual responsibilities while supporting group objectives reflects their strong']} />
      </GptFrame>
      <GptFrame title="Data Analyst" tabTitle="ChatGPT - Data Anal" path="/g/g-HMNcP6w7d-data-analyst" selected="" share={false} time="11:20" weather={['sports', 'Sports headline', 'Patriots release...']}>
        <div className="flex flex-col items-center pt-[11px]">
          <span className="grid size-[20px] place-items-center rounded-full bg-black font-['Liberation_Mono'] text-[8px] leading-[20px] font-bold text-[#d9cfa0]">&gt;_</span>
          <h2 className="mt-[7px] text-[10px] leading-[14px] font-semibold text-[#ececec]">Data Analyst</h2>
          <p className="mt-[3px] flex items-center gap-[3px] text-[6px] leading-[8px] text-[#8f8f8f]">By ChatGPT <GptMark className="size-[5px]" /></p>
          <p className="mt-[4px] text-[6px] leading-[8px] whitespace-nowrap">Drop in any files and I can help analyze and visualize your data.</p>
        </div>
        <form className="mt-[37px] -mr-2 -ml-[5px] flex flex-col rounded-[12px] bg-[#303030] pt-[7px] pb-[5px] pl-[10px]" onSubmit={(e) => e.preventDefault()}>
          <textarea aria-label="Message" rows={2} defaultValue={'We just completed our annual employee performance reviews.  I have a dataset with all the detail\ninformation.  Can you provide a report of findings, fut'} className="block h-[22px] w-full resize-none overflow-hidden bg-transparent text-[7px] leading-[11px] whitespace-pre" />
          <div className="mt-[3px] flex h-[16px] items-center pr-[5px]"><button aria-label="Attach" className="text-[#8f8f8f]"><Plus className="size-[8px]" /></button><SendButton mode="send" /></div>
        </form>
      </GptFrame>

      <GptFrame title="Data Analyst" tabTitle="ChatGPT - Data Anal" path={analystPath} selected="Employee Review Report Sum" report time="11:21" weather={['news', 'Upcoming', 'Earnings']} thumb="top-[109px] h-[61px]" composer={<Composer mode="stop" tools={false} caret />} overlay={<><Ring className="top-[221px] left-[296px]" /><Pointer className="top-[237px] left-[312px]" /><span className="absolute top-[264px] left-[574px] size-[3px] rounded-full bg-[#20206a]" /></>}>
        <ul className="-mt-[9px]">
          <Bullet className=""><B>Full Name</B> – Employee name</Bullet>
          <Bullet><B>Department</B> – Employee's department</Bullet>
          <Bullet><B>Location</B> – Work location</Bullet>
          <Bullet><B>Gender</B> – Employee's gender</Bullet>
        </ul>
        <Head className="mt-[19px]">Employee Performance Review Report</Head>
        <Sub className="mt-[6px]">1. Key Findings</Sub>
        <ul><Bullet className="mt-[3px]"><span className="font-medium">Performance Distribution:</span><br />I'll analyze the distribution of performance ratings to see the percentage of employees in each<br />category.</Bullet></ul>
        <Head className="mt-[19px]">2. Analysis &amp; Insights</Head>
        <Sub>Performance Distribution</Sub>
      </GptFrame>
      <GptFrame title="Data Analyst" tabTitle="ChatGPT - Data Anal" path={analystPath} selected="Employee Review Report Sum" report time="11:22" weather={['news', 'Finance headline', 'Federal changes...']} thumb="top-[160px] h-[20px]" composer={<Composer mode="stop" tools={false} />} overlay={<div className="absolute top-[267px] left-[337px] h-[8px] w-px bg-[#bbb]" />}>
        <Bubble lines={['can you provide this report in Word format.  Also include emojis', 'and charts.']} />
        <Lines className="mt-[20px]" lines={["Great idea! I'll generate a Word report with:", <><Check /> Key findings and insights</>, <><Check /> Charts for better visualization</>, <><Check /> Emojis to make it engaging</>]} />
        <Lines className="mt-[4px]" lines={['Let me first create the charts and then compile everything into a professional Word document.']} />
        <p className="mt-[8px] flex items-center gap-[3px] text-[7px] leading-[12px] text-[#555]">Analyzing <ChevronDown className="size-[5px] text-[#777]" strokeWidth={3} /></p>
      </GptFrame>
      <WriterFrame />
      <GptFrame title="Data Analyst" tabTitle="ChatGPT - Data Anal" path={analystPath} selected="Employee Review Report Sum" report time="11:25" weather={['stocks', 'Watchlist', 'Ideas']} thumb="top-[164px] h-[17px]" composer={<Composer mode="stop" tools={false} />} overlay={<><Ring className="top-[161px] left-[331px]" /><Pointer className="top-[178px] left-[347px]" /></>}>
        <Bubble lines={['yes']} className="mt-[14px]" />
        <Head className="mt-[20px]">Bias Analysis Results</Head>
        <Sub className="mt-[5px]"><Key n="1" /> Gender Bias <Restroom /></Sub>
        <ul>
          <Bullet><B>P-value: 0.28</B> (Not statistically significant)</Bullet>
          <Bullet>There is <B>no strong evidence of gender bias</B> in performance ratings. While females have a slightly<br />higher average <span className="text-[#a5a5a5]">rating (3.29 vs. 2.83), the difference is</span> <strong className="font-semibold text-[#bbb]">not statistically</strong> <span className="text-[#999]">significant.</span></Bullet>
        </ul>
        <div className="opacity-60"><Sub className="mt-[8px]"><Key n="2" /> Ethnicity Bias</Sub></div>
      </GptFrame>
    </div>
  );
}
